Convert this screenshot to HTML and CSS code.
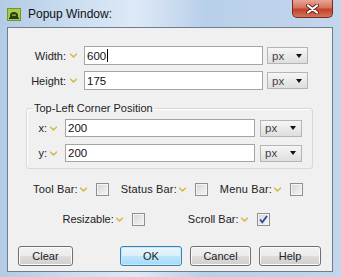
FILE: index.html
```html
<!DOCTYPE html>
<html>

<head>
	<link rel="stylesheet" href="styles.css">
</head>

<body>
	<div class="window">
		<div class="titlebar">
			<svg class="app-icon" width="14" height="13" viewBox="0 0 14 13">
				<rect x="0.5" y="0.5" width="13" height="12" fill="#a6cc4a" stroke="#6f9a22"/>
				<path d="M3 10 V7.5 A4 3.5 0 0 1 11 7.5 V10 Z" fill="#2e3a1c"/>
				<rect x="2" y="9.5" width="10" height="1.5" fill="#2e3a1c"/>
				<rect x="5" y="6.5" width="4" height="1.2" fill="#a6cc4a"/>
			</svg>
			<span class="title">Popup Window:</span>
			<div class="close">
				<svg width="13" height="10" viewBox="0 0 13 10">
					<path d="M2 1.5 L11 8.5 M11 1.5 L2 8.5" stroke="#6a2418" stroke-width="4" stroke-linecap="round"/>
					<path d="M2 1.5 L11 8.5 M11 1.5 L2 8.5" stroke="#fff" stroke-width="2.2" stroke-linecap="round"/>
				</svg>
			</div>
		</div>
		<div class="client">
			<div class="size-row">
				<span class="label">Width:</span>
				<svg class="chev" width="7" height="5" viewBox="0 0 7 5"><path d="M0 0 L3.5 2.8 L7 0 L7 1.8 L3.5 5 L0 1.8 Z" fill="#d2bb48"/></svg>
				<div class="field wide">600<span class="caret"></span></div>
				<div class="unit">px<span class="arrow"></span></div>
			</div>
			<div class="size-row">
				<span class="label">Height:</span>
				<svg class="chev" width="7" height="5" viewBox="0 0 7 5"><path d="M0 0 L3.5 2.8 L7 0 L7 1.8 L3.5 5 L0 1.8 Z" fill="#d2bb48"/></svg>
				<div class="field wide">175</div>
				<div class="unit">px<span class="arrow"></span></div>
			</div>

			<fieldset class="corner">
				<legend>Top-Left Corner Position</legend>
				<div class="pos-row">
					<span class="label short">x:</span>
					<svg class="chev" width="7" height="5" viewBox="0 0 7 5"><path d="M0 0 L3.5 2.8 L7 0 L7 1.8 L3.5 5 L0 1.8 Z" fill="#d2bb48"/></svg>
					<div class="field mid">200</div>
					<div class="unit">px<span class="arrow"></span></div>
				</div>
				<div class="pos-row">
					<span class="label short">y:</span>
					<svg class="chev" width="7" height="5" viewBox="0 0 7 5"><path d="M0 0 L3.5 2.8 L7 0 L7 1.8 L3.5 5 L0 1.8 Z" fill="#d2bb48"/></svg>
					<div class="field mid">200</div>
					<div class="unit">px<span class="arrow"></span></div>
				</div>
			</fieldset>

			<div class="checks first">
				<div class="opt">Tool Bar:<svg class="chev" width="7" height="5" viewBox="0 0 7 5"><path d="M0 0 L3.5 2.8 L7 0 L7 1.8 L3.5 5 L0 1.8 Z" fill="#d2bb48"/></svg><span class="box"></span></div>
				<div class="opt">Status Bar:<svg class="chev" width="7" height="5" viewBox="0 0 7 5"><path d="M0 0 L3.5 2.8 L7 0 L7 1.8 L3.5 5 L0 1.8 Z" fill="#d2bb48"/></svg><span class="box"></span></div>
				<div class="opt">Menu Bar:<svg class="chev" width="7" height="5" viewBox="0 0 7 5"><path d="M0 0 L3.5 2.8 L7 0 L7 1.8 L3.5 5 L0 1.8 Z" fill="#d2bb48"/></svg><span class="box"></span></div>
			</div>
			<div class="checks second">
				<div class="opt">Resizable:<svg class="chev" width="7" height="5" viewBox="0 0 7 5"><path d="M0 0 L3.5 2.8 L7 0 L7 1.8 L3.5 5 L0 1.8 Z" fill="#d2bb48"/></svg><span class="box"></span></div>
				<div class="opt">Scroll Bar:<svg class="chev" width="7" height="5" viewBox="0 0 7 5"><path d="M0 0 L3.5 2.8 L7 0 L7 1.8 L3.5 5 L0 1.8 Z" fill="#d2bb48"/></svg><span class="box"><svg width="11" height="11" viewBox="0 0 11 11"><path d="M2 5.5 L4.3 8.3 L9 2" fill="none" stroke="#2c4a9e" stroke-width="1.8"/></svg></span></div>
			</div>

			<div class="buttons">
				<button class="btn clear">Clear</button>
				<span class="spacer"></span>
				<button class="btn ok">OK</button>
				<button class="btn">Cancel</button>
				<button class="btn help">Help</button>
			</div>
		</div>
	</div>
</body>

</html>
```

FILE: styles.css
```css
html, body {
	margin: 0;
	padding: 0;
}

body {
	width: 341px;
	height: 277px;
	overflow: hidden;
	font-family: 'Liberation Sans', Arial, sans-serif;
	font-size: 11px;
	color: #222;
}

.window {
	width: 341px;
	height: 277px;
	box-sizing: border-box;
	padding: 0 8px 5px 7px;
	display: flex;
	flex-direction: column;
	background: linear-gradient(to right, #b3cbe6 0%, #cfe0f2 25%, #dde9f6 40%, #b9d0ea 60%, #c2d6ec 100%);
}

.titlebar {
	height: 27px;
	display: flex;
	align-items: center;
	margin-right: -8px;
}

.app-icon {
	margin-top: 1px;
}

.title {
	font-size: 12px;
	color: #111;
	margin-left: 7px;
	margin-top: 1px;
}

.close {
	margin-left: auto;
	margin-right: 8px;
	align-self: flex-start;
	width: 41px;
	height: 18px;
	box-sizing: border-box;
	border: 1px solid #7a2a22;
	border-top: none;
	border-radius: 0 0 5px 5px;
	background: linear-gradient(#e8a593 0%, #d3735e 45%, #c2422c 55%, #d2745a 100%);
	display: flex;
	justify-content: center;
	align-items: center;
}

.client {
	flex: 1;
	background: #f0f0f0;
	border: 1px solid #6f7d8c;
	padding-top: 18px;
	display: flex;
	flex-direction: column;
}

.size-row {
	display: flex;
	align-items: center;
	height: 19px;
	padding-left: 20px;
	margin-bottom: 6px;
}

.label {
	width: 38px;
	text-align: right;
	margin-right: 4px;
}

.label.short {
	width: 12px;
	margin-right: 3px;
}

.chev {
	flex: none;
}

.field {
	height: 19px;
	box-sizing: border-box;
	border: 1px solid #a5a5a5;
	background: #fff;
	padding-left: 2px;
	display: flex;
	align-items: center;
	font-size: 11.5px;
	color: #111;
}

.field.wide {
	width: 179px;
	margin-left: 7px;
}

.field.mid {
	width: 190px;
	height: 18px;
	margin-left: 8px;
}

.caret {
	width: 1px;
	height: 13px;
	background: #000;
	margin-left: 1px;
}

.unit {
	width: 41px;
	height: 17px;
	box-sizing: border-box;
	margin-left: 4px;
	border: 1px solid #b5b5b5;
	background: linear-gradient(#f6f6f6, #dedede);
	display: flex;
	align-items: center;
	padding-left: 4px;
	font-size: 11.5px;
	color: #4a3a4a;
}

.arrow {
	margin-left: auto;
	margin-right: 5px;
	width: 0;
	height: 0;
	border-left: 3.5px solid transparent;
	border-right: 3.5px solid transparent;
	border-top: 4px solid #111;
}

.corner {
	margin: 6px 19px 0 18px;
	padding: 4px 10px 6px 8px;
	border: 1px solid #d8d8d8;
	border-radius: 3px;
	box-shadow: inset 1px 1px 0 #fff;
}

.corner legend {
	padding: 0 1px;
	margin-left: -2px;
	line-height: 13px;
	font-size: 11px;
}

.pos-row {
	display: flex;
	align-items: center;
	height: 18px;
}

.pos-row + .pos-row {
	margin-top: 7px;
}

.pos-row .unit {
	margin-left: 5px;
	width: 42px;
}

.checks {
	display: flex;
	justify-content: center;
	height: 14px;
	align-items: center;
	margin-right: 4px;
}

.checks.first {
	margin-top: 13px;
	gap: 12px;
	letter-spacing: 0.15px;
}

.checks.second {
	margin-top: 16px;
	gap: 43px;
	margin-right: 8px;
}

.opt {
	display: flex;
	align-items: center;
}

.opt .chev {
	margin-left: 2px;
}

.box {
	width: 13px;
	height: 13px;
	box-sizing: border-box;
	margin-left: 9px;
	border: 1px solid #8e8f8f;
	background: linear-gradient(135deg, #d6d6d6, #f6f6f6);
	box-shadow: inset 0 0 0 1px #f4f4f4;
	display: flex;
	align-items: center;
	justify-content: center;
}

.buttons {
	display: flex;
	margin-top: 20px;
	padding: 0 11px 0 10px;
	gap: 8px;
}

.spacer {
	flex: 1;
}

.btn {
	height: 20px;
	width: 61px;
	padding: 0;
	font-family: 'Liberation Sans', Arial, sans-serif;
	font-size: 11px;
	color: #222;
	border: 1px solid #707070;
	border-radius: 3px;
	background: linear-gradient(#f2f2f2 0%, #ebebeb 50%, #dddddd 50%, #cfcfcf 100%);
	box-shadow: inset 0 0 0 1px #fbfbfb;
}

.btn.clear {
	width: 55px;
}

.btn.help {
	width: 62px;
}

.btn.ok {
	width: 62px;
	border-color: #3c7fb1;
	background: linear-gradient(#eaf6fd 0%, #d9f0fc 50%, #bee6fd 50%, #a7d9f5 100%);
	box-shadow: inset 0 0 0 1px #c6e8fb;
}
```
